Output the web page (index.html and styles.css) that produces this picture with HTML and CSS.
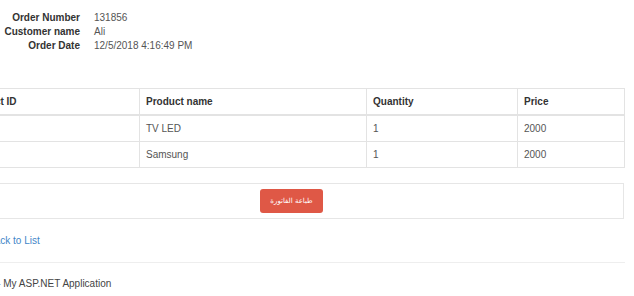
FILE: index.html
```html
<!DOCTYPE html>
<html lang="en">
<head>
    <meta charset="UTF-8">
    <meta name="viewport" content="width=device-width, initial-scale=1.0">
    <title>Order Details</title>
    <link rel="stylesheet" href="styles.css">
</head>
<body>

<div class="page">

    <!-- Order header -->
    <dl class="orderInfo">
        <dt>Order Number</dt>
        <dd>131856</dd>
        <dt>Customer name</dt>
        <dd>Ali</dd>
        <dt>Order Date</dt>
        <dd>12/5/2018 4:16:49 PM</dd>
    </dl>

    <!-- Order lines -->
    <table class="itemsTable">
        <thead>
        <tr>
            <th class="colId">Product ID</th>
            <th class="colName">Product name</th>
            <th class="colQty">Quantity</th>
            <th class="colPrice">Price</th>
        </tr>
        </thead>
        <tbody>
        <tr>
            <td></td>
            <td>TV LED</td>
            <td>1</td>
            <td>2000</td>
        </tr>
        <tr>
            <td></td>
            <td>Samsung</td>
            <td>1</td>
            <td>2000</td>
        </tr>
        </tbody>
    </table>

    <div class="printBox">
        <button type="button" class="printButton" dir="rtl">طباعة الفاتورة</button>
    </div>

    <p class="backLink"><a href="#">Back to List</a></p>

    <hr class="footerLine">
    <footer class="footer">
        <p>&copy; 2018 - My ASP.NET Application</p>
    </footer>

</div>

</body>
</html>
```

FILE: styles.css
```css
body {
    margin: 0;
    font-family: "Liberation Sans", Arial, sans-serif;
    font-size: 10px;
    line-height: 14px;
    color: #444;
    background-color: #fff;
    overflow: hidden;
}

.page {
    margin-left: -38px;
    width: 663px;
    padding-top: 11px;
}

.orderInfo {
    display: grid;
    grid-template-columns: 118px 1fr;
    column-gap: 14px;
    margin: 0;
}

.orderInfo dt {
    text-align: right;
    font-weight: bold;
    color: #333;
}

.orderInfo dd {
    margin: 0;
    color: #555;
}

.itemsTable {
    width: 666px;
    margin: 35px 0 0 -3px;
    border-collapse: collapse;
    table-layout: fixed;
}

.itemsTable th, .itemsTable td {
    border: 1px solid #e3e3e3;
    padding: 0 6px;
    height: 25px;
    text-align: left;
    color: #555;
}

.itemsTable th {
    font-weight: bold;
    color: #333;
    border-bottom: 2px solid #e3e3e3;
}

.colId { width: 167px; }
.colName { width: 214px; }
.colQty { width: 138px; }

.printBox {
    width: 663px;
    margin: 15px 0 0 -3px;
    padding: 5px 0;
    border: 1px solid #e6e6e6;
    text-align: center;
    background-color: #fff;
}

.printButton {
    width: 63px;
    height: 24px;
    padding: 0;
    border: none;
    border-radius: 3px;
    background-color: #df5846;
    color: #fff;
    font-family: "DejaVu Sans", sans-serif;
    font-size: 7px;
}

.backLink {
    margin: 15px 0 0 26px;
}

.backLink a {
    color: #3f86c8;
    text-decoration: none;
}

.footerLine {
    margin: 14px 0 0 0;
    border: none;
    border-top: 1px solid #eee;
}

.footer p {
    margin: 14px 0 0 0;
    color: #444;
}
```
